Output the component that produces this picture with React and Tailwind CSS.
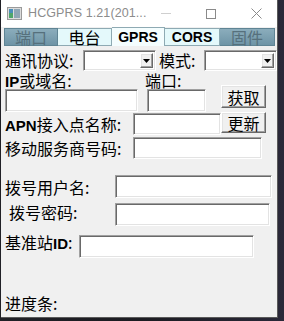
import React from 'react';

const cjk = "font-['Noto_Sans_CJK_SC','Noto_Sans_CJK_JP',sans-serif]";
const latinBold = "font-['Liberation_Sans',Arial,sans-serif] font-bold";

const sunken =
  'bg-white border border-t-[#a0a0a0] border-l-[#a0a0a0] border-r-white border-b-white shadow-[inset_1px_1px_0_#696969,inset_-1px_-1px_0_#e3e3e3]';
const raised =
  'bg-[#f0f0f0] border border-t-white border-l-white border-r-[#696969] border-b-[#696969] shadow-[inset_-1px_-1px_0_#a0a0a0,inset_1px_1px_0_#e3e3e3]';

const TextBox = ({ className }) => <div className={`${sunken} ${className}`} />;

const Combo = ({ className }) => (
  <div className={`${sunken} ${className} flex justify-end items-stretch p-[2px]`}>
    <div className={`${raised} w-[13px] flex items-center justify-center`}>
      <svg width="7" height="4" viewBox="0 0 7 4">
        <path d="M0 0h7L3.5 4z" fill="#000" />
      </svg>
    </div>
  </div>
);

const Button = ({ children, className }) => (
  <div
    className={`${raised} ${cjk} ${className} flex items-center justify-center text-[16px] leading-none text-black`}
  >
    {children}
  </div>
);

const Tab = ({ children, kind, className = '' }) => {
  const styles = {
    off: 'bg-gradient-to-b from-[#8badbc] to-[#6e94a6] text-[#56707c] border-[#5f8494] h-[18px] mt-[1px]',
    idle: 'bg-[#e4f9fb] text-black border-[#8eaab3] h-[18px] mt-[1px]',
    on: 'bg-[#f4fdfe] text-black border-[#8eaab3] h-[19px] border-b-0',
  };
  return (
    <div
      className={`${styles[kind]} ${className} border flex items-center justify-center text-[16px] leading-none`}
    >
      {children}
    </div>
  );
};

const App = () => {
  return (
    <div className="w-[284px] h-[321px] bg-gradient-to-r from-[#202026] via-[#1c1c22] to-[#2a2838] overflow-hidden">
      <div className={`ml-[1px] w-[277px] h-[318px] bg-[#f0f0f0] flex flex-col border-r border-b border-[#5a5a5a] ${cjk} text-black`}>
        {/* title bar */}
        <div className="h-[27px] bg-white flex items-center shrink-0">
          <svg className="ml-[6px]" width="15" height="13" viewBox="0 0 15 13">
            <rect x="0.5" y="0.5" width="14" height="12" fill="#dcdcdc" stroke="#9a9a9a" />
            <rect x="2" y="2" width="4" height="9" fill="#4a8fb8" />
            <rect x="2" y="6" width="4" height="5" fill="#4ea66a" />
            <rect x="7" y="2" width="6" height="9" fill="#8fa6b5" />
          </svg>
          <span className="ml-[6px] font-['Liberation_Sans',Arial,sans-serif] text-[12.5px] text-[#8c8c8c] tracking-[0.1px]">
            HCGPRS 1.21(201...
          </span>
          <div className="ml-auto flex items-center">
            <div className="w-[10px] h-px bg-[#cfcfcf] mr-[35px]" />
            <div className="w-[10px] h-[10px] border border-[#8a8a8a] mr-[35px]" />
            <svg className="mr-[15px]" width="11" height="11" viewBox="0 0 11 11">
              <path d="M0.5 0.5l10 10M10.5 0.5l-10 10" stroke="#8a8a8a" strokeWidth="1" />
            </svg>
          </div>
        </div>

        {/* tabs */}
        <div className="h-[19px] flex items-start pl-[3px] shrink-0">
          <Tab kind="off" className="w-[54px]">端口</Tab>
          <Tab kind="idle" className="w-[54px] border-l-0">电台</Tab>
          <Tab kind="on" className={`w-[53px] border-l-0 ${latinBold} !text-[14px]`}>GPRS</Tab>
          <Tab kind="idle" className={`w-[55px] border-l-0 ${latinBold} !text-[14px]`}>CORS</Tab>
          <Tab kind="off" className="w-[55px] border-l-0">固件</Tab>
        </div>

        {/* content */}
        <div className="pl-[4px] flex flex-col text-[16px]">
          <div className="mt-[4px] h-[21px] flex items-center">
            <div className="w-[78px] leading-[21px]">通讯协议:</div>
            <Combo className="w-[73px] h-[21px]" />
            <div className="ml-[3px] w-[45px] leading-[21px]">模式:</div>
            <Combo className="w-[73px] h-[21px]" />
          </div>

          <div className="mt-[1px] h-[40px] flex items-start">
            <div className="w-[140px] flex flex-col">
              <div className="h-[17px] leading-[17px]">
                <span className={`${latinBold} text-[15px]`}>IP</span>或域名:
              </div>
              <TextBox className="w-[133px] h-[23px]" />
            </div>
            <div className="w-[76px] flex flex-col">
              <div className="h-[17px] leading-[17px]">端口:</div>
              <TextBox className="ml-[2px] w-[59px] h-[23px]" />
            </div>
            <Button className="mt-[13px] w-[45px] h-[23px]">获取</Button>
          </div>

          <div className="h-[24px] flex items-start">
            <div className="w-[128px] h-[24px] leading-[24px] whitespace-nowrap">
              <span className={`${latinBold} text-[15px]`}>APN</span>接入点名称:
            </div>
            <TextBox className="mt-[1px] w-[88px] h-[22px]" />
            <Button className="w-[45px] h-[21px]">更新</Button>
          </div>

          <div className="mt-[1px] h-[22px] flex items-center">
            <div className="w-[128px] leading-[22px] whitespace-nowrap">移动服务商号码:</div>
            <TextBox className="w-[129px] h-[22px]" />
          </div>

          <div className="mt-[16px] h-[23px] flex items-center">
            <div className="w-[110px] leading-[23px] pt-[2px]">拨号用户名:</div>
            <TextBox className="w-[157px] h-[23px]" />
          </div>

          <div className="mt-[5px] h-[23px] flex items-center">
            <div className="w-[110px] pl-[4px] leading-[23px] mt-[-4px]">拨号密码:</div>
            <TextBox className="w-[155px] h-[23px]" />
          </div>

          <div className="mt-[9px] h-[23px] flex items-center">
            <div className="w-[74px] leading-[23px] mt-[-7px] whitespace-nowrap">
              基准站<span className={`${latinBold} text-[15px]`}>ID</span>:
            </div>
            <TextBox className="w-[175px] h-[23px]" />
          </div>

          <div className="mt-[37px] h-[17px] leading-[17px]">进度条:</div>
        </div>
      </div>
    </div>
  );
};

export default App;
